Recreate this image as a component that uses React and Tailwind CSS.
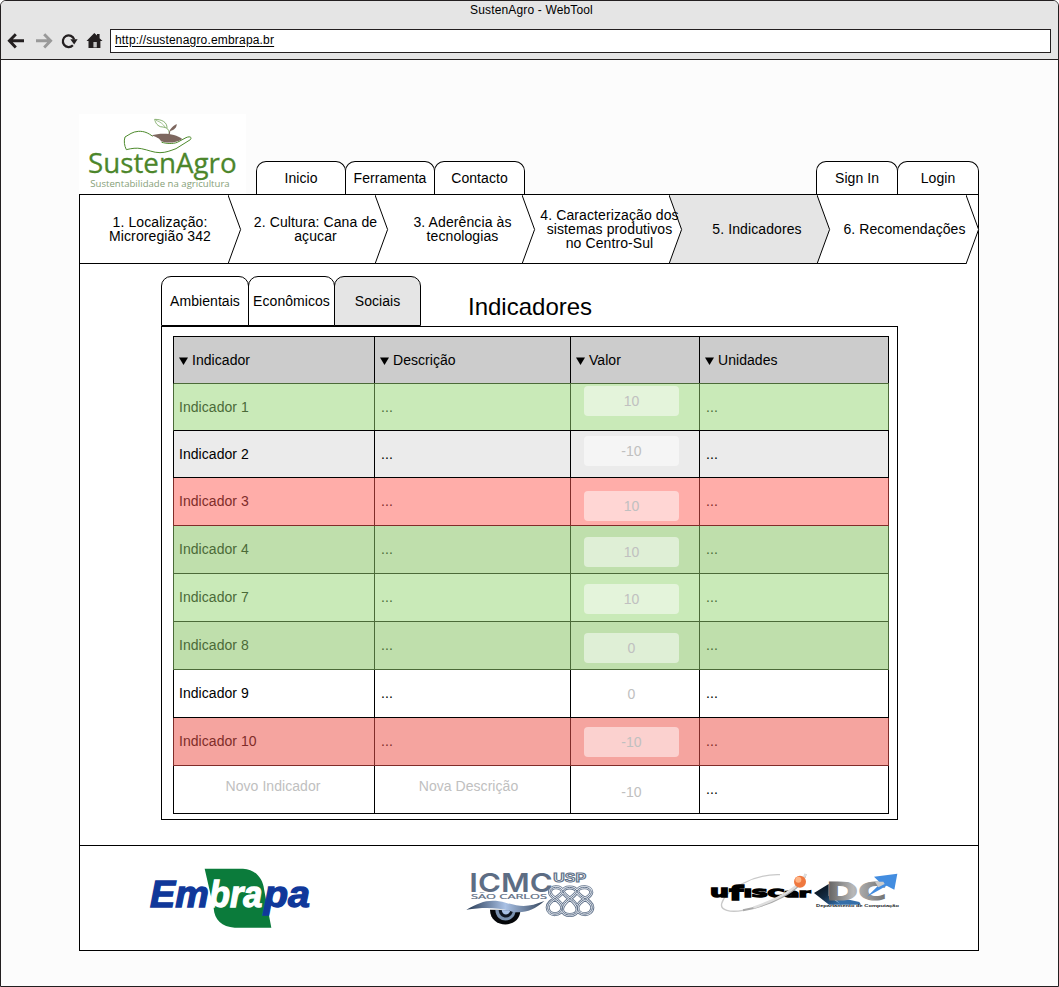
import React from "react";

function BrowserBar() {
  return (
    <header className="h-[59px] shrink-0 rounded-t-[5px] border-b border-[#231f20] bg-[#e5e5e5]">
      <div className="flex h-[28px] justify-center pl-[4px] pt-px text-[12px] leading-[16px] tracking-[0.15px]">SustenAgro - WebTool</div>
      <div className="flex h-[24px] items-center pr-[7px]">
        <svg className="h-[24px] w-[109px] shrink-0" viewBox="1 29 109 24" fill="none">
          <path d="M24 40.8H10.5M15.8 34.2L9.4 40.8L15.8 47.4" stroke="#231f20" strokeWidth="2.9" />
          <path d="M36 40.8H49.5M44.2 34.2L50.6 40.8L44.2 47.4" stroke="#999" strokeWidth="2.9" />
          <path d="M72.9 45.2A5.8 5.8 0 1 1 74.2 39.5" stroke="#231f20" strokeWidth="2.2" />
          <path d="M70.3 39.3H77.6L74.2 44.6Z" fill="#231f20" />
          <path d="M86.5 41L94.3 33L97 35.6V34H99.6V38.2L102.5 41H100.4V48H88.5V41Z" fill="#231f20" />
          <rect x="93.4" y="42" width="3.4" height="5.4" fill="#c5c5c5" />
        </svg>
        <div className="flex h-[24px] flex-1 items-center border border-[#231f20] bg-white pb-[3px] pl-[4px] text-[12px] tracking-[0.18px]">
          <span className="underline underline-offset-2">http://sustenagro.embrapa.br</span>
        </div>
      </div>
    </header>
  );
}

function SustenAgroLogo() {
  return (
    <svg className="h-[80px] w-[167px] bg-white tracking-normal" viewBox="27 27 501 240">
      <g fill="none" stroke="#4d8a2c" strokeWidth="3">
        <path d="M248 94C235 84 222 78 205 79C187 80 178 89 165 96C161 108 163 122 169 134C185 130 200 128 214 131C235 135 250 143 270 143C288 143 301 137 318 131L361 104C367 96 359 93 348 98L322 112C307 118 287 115 275 112" />
        <path d="M298 88C298 68 286 67 271 65C259 60 256 51 254 43C275 43 292 51 291 70" strokeWidth="2" />
        <path d="M258 46C272 51 279 57 286 67" strokeWidth="1.5" />
      </g>
      <path d="M245 91C270 83 315 83 337 102C315 116 290 114 273 109C270 101 259 96 245 91Z" fill="#7d675f" />
      <path d="M296 88C297 75 306 64 320 57C321 67 313 75 301 78L299 89Z" fill="#7d675f" />
      <text x="54" y="204" fontFamily="'Open Sans', sans-serif" fontSize="80" fill="#4c862b" stroke="#4c862b" strokeWidth="0.8" textLength="446" lengthAdjust="spacingAndGlyphs">SustenAgro</text>
      <text x="61" y="247" fontFamily="'Open Sans', sans-serif" fontWeight="400" fontSize="28" fill="#86a078" textLength="418" lengthAdjust="spacingAndGlyphs">Sustentabilidade na agricultura</text>
    </svg>
  );
}

function MainTab({ className, children }) {
  return (
    <div className={`flex h-[33px] items-center justify-center rounded-t-[10px] border border-b-0 border-black bg-white ${className}`}>{children}</div>
  );
}

const steps = [
  { lines: ["1. Localização:", "Microregião 342"], box: "w-[148px] z-60", text: "left-[6px]" },
  { lines: ["2. Cultura: Cana de", "açucar"], box: "w-[147px] z-50", text: "left-[14px]" },
  { lines: ["3. Aderência às", "tecnologias"], box: "w-[147px] z-40", text: "left-[14px]" },
  { lines: ["4. Caracterização dos", "sistemas produtivos", "no Centro-Sul"], box: "w-[147px] z-30", text: "left-[14px]" },
  { lines: ["5. Indicadores"], box: "w-[148px] z-20", text: "left-[14px]", active: true },
  { lines: ["6. Recomendações"], box: "w-[149px] z-10", text: "left-[13px]" },
];

function Step({ step }) {
  return (
    <div className={`relative flex h-[69px] shrink-0 items-center justify-center border-b border-black ${step.box} ${step.active ? "bg-[#e5e5e5]" : "bg-white"}`}>
      <svg className="absolute left-full top-0 h-[69px] w-[14px]" viewBox="0 0 14 69">
        <path d="M0 0L12.6 34.5L0 69" fill={step.active ? "#e5e5e5" : "#fff"} stroke="#000" strokeWidth="1" />
      </svg>
      <div className={`relative text-center leading-[14px] tracking-[0.1px] whitespace-nowrap ${step.text}`}>
        {step.lines.map((l) => <div key={l}>{l}</div>)}
      </div>
    </div>
  );
}

const green = "bg-[#c9eab8] text-[#4b6a38]";
const darkGreen = "bg-[#bfdfac] text-[#4b6a38]";
const gEdge = "border-[#4b6a38]";
const rEdge = "border-[#802c29]";
const rows = [
  { name: "Indicador 1", value: "10", h: "h-[47px]", tone: green, edge: gEdge, line: "border-b-black", pill: "mt-[2px] bg-[#e4f4db]" },
  { name: "Indicador 2", value: "-10", h: "h-[47px]", tone: "bg-[#ebebeb]", edge: "border-black", line: "border-b-black", pill: "mt-[5px] bg-[#f5f5f5]" },
  { name: "Indicador 3", value: "10", h: "h-[48px]", tone: "bg-[#ffada9] text-[#802c29]", edge: rEdge, line: "border-b-[#802c29]", pill: "mt-[13px] bg-[#ffd6d4]" },
  { name: "Indicador 4", value: "10", h: "h-[48px]", tone: darkGreen, edge: gEdge, line: "border-b-[#4b6a38]", pill: "mt-[11px] bg-[#dfefd6]" },
  { name: "Indicador 7", value: "10", h: "h-[48px]", tone: green, edge: gEdge, line: "border-b-[#4b6a38]", pill: "mt-[10px] bg-[#e4f4db]" },
  { name: "Indicador 8", value: "0", h: "h-[48px]", tone: darkGreen, edge: gEdge, line: "border-b-[#4b6a38]", pill: "mt-[11px] bg-[#dfefd6]" },
  { name: "Indicador 9", value: "0", h: "h-[48px]", tone: "bg-white", edge: "border-black", line: "border-b-black", pill: "mt-[9px] bg-white" },
  { name: "Indicador 10", value: "-10", h: "h-[48px]", tone: "bg-[#f5a49f] text-[#802c29]", edge: rEdge, line: "border-b-[#802c29]", pill: "mt-[9px] bg-[#fbd1cf]" },
  { draft: true, value: "-10", h: "h-[48px]", tone: "bg-white", edge: "border-black", line: "border-b-black", pill: "mt-[11px] bg-white" },
];
const columns = "grid grid-cols-[201px_196px_129px_189px]";

function IndicatorTable() {
  return (
    <div className="w-[716px] border-t border-black">
      <div className={`${columns} h-[47px] border-b border-l border-l-black border-b-[#4b6a38] bg-[#ccc]`}>
        {["Indicador", "Descrição", "Valor", "Unidades"].map((c) => (
          <div key={c} className="flex items-center gap-[4px] border-r border-black pl-[5px]">
            <svg className="mt-[2px] h-[8px] w-[9px]" viewBox="0 0 9 8"><path d="M0 0.5H9L4.5 8Z" /></svg>
            <span>{c}</span>
          </div>
        ))}
      </div>
      {rows.map((r, i) => (
        <div key={i} className={`${columns} ${r.h} border-b border-l ${r.tone} ${r.edge} ${r.line}`}>
          {r.draft ? (
            <>
              <div className="flex items-center justify-center border-r border-black pb-[7px] pr-[2px] text-[#c0c0c0]">Novo Indicador</div>
              <div className="flex items-center justify-center border-r border-black pb-[7px] pr-[8px] text-[#c0c0c0]">Nova Descrição</div>
            </>
          ) : (
            <>
              <div className={`flex items-center border-r pb-px pl-[5px] ${r.edge}`}>{r.name}</div>
              <div className={`flex items-center border-r pb-px pl-[6px] ${r.edge}`}>...</div>
            </>
          )}
          <div className={`border-r pl-[13px] ${r.edge}`}>
            <div className={`flex h-[30px] w-[95px] items-center justify-center rounded-[4px] text-[#c0c0c0] ${r.pill}`}>{r.value}</div>
          </div>
          <div className={`flex items-center border-r pb-px pl-[6px] ${r.edge}`}>...</div>
        </div>
      ))}
    </div>
  );
}

function EmbrapaLogo() {
  return (
    <svg className="h-[60px] w-[162px] tracking-normal" viewBox="28 40 486 180">
      <path d="M195 42H310C350 44 370 75 373 103L395 219H285C247 217 224 196 222 160Z" fill="#0b7b3b" />
      <g fontFamily="'Liberation Sans', sans-serif" fontWeight="700" fontStyle="italic" fontSize="113" strokeWidth="4">
        <text x="31" y="158" fill="#10389a" stroke="#10389a" textLength="176" lengthAdjust="spacingAndGlyphs">Em</text>
        <text x="208" y="158" fill="#fff" stroke="#fff" textLength="160" lengthAdjust="spacingAndGlyphs">bra</text>
        <text x="373" y="158" fill="#10389a" stroke="#10389a" textLength="138" lengthAdjust="spacingAndGlyphs">pa</text>
      </g>
    </svg>
  );
}

const knot =
  "M284 97C284 78 315 76 323 95C330 113 364 122 367 147C366 171 321 171 320 147C323 122 357 113 364 95C372 76 407 78 408 97C407 115 368 120 366 143C366 168 410 170 411 142C410 119 370 113 366 95C358 78 327 78 322 95C316 113 278 119 277 142C278 170 320 168 321 143C319 120 285 115 284 97Z";

function IcmcLogo() {
  return (
    <svg className="h-[56px] w-[130px] overflow-visible tracking-normal" viewBox="32 36 390 168">
      <defs>
        <linearGradient id="wave" x1="0" x2="1"><stop offset="0" stopColor="#263954" /><stop offset=".5" stopColor="#a9c1e5" /><stop offset="1" stopColor="#35465d" /></linearGradient>
      </defs>
      <text x="42" y="95" fontFamily="Inter, sans-serif" fontWeight="600" fontSize="77" fill="#5d6d84" textLength="250" lengthAdjust="spacingAndGlyphs">ICMC</text>
      <text x="47" y="116" fontFamily="'Open Sans', sans-serif" fontSize="20" fill="#5d6d84" stroke="#5d6d84" strokeWidth="0.6" textLength="228" lengthAdjust="spacingAndGlyphs">SÃO CARLOS</text>
      <path d="M104 149C104 207 195 208 195 151Z" fill="#05070a" />
      <path d="M120 150C122 192 179 192 181 151Z" fill="#7990ae" />
      <path d="M130 150C132 180 171 180 173 151Z" fill="#101722" />
      <path d="M139 150C141 168 162 168 165 151Z" fill="#a9c1e5" />
      <path d="M33 149C75 126 102 115 151 128C200 143 224 140 267 123C235 152 205 161 171 155C125 142 87 142 33 149Z" fill="url(#wave)" />
      <text x="294" y="67" fontFamily="'Liberation Sans', sans-serif" fontWeight="700" fontSize="36" fill="#fff" stroke="#61728a" strokeWidth="3" textLength="98" lengthAdjust="spacingAndGlyphs">USP</text>
      <path d={knot} fill="none" stroke="#61728a" strokeWidth="12" />
      <path d={knot} fill="none" stroke="#e9edf3" strokeWidth="7" />
      <path d={knot} fill="none" stroke="#61728a" strokeWidth="3" />
    </svg>
  );
}

function UfscarLogo() {
  return (
    <svg className="h-[42px] w-[103px] tracking-normal" viewBox="30 33 309 126">
      <path d="M240 44C160 41 75 91 65 131C60 151 90 158 129 151" fill="none" stroke="#c9c9c9" strokeWidth="4" />
      <g fontFamily="'DejaVu Sans', sans-serif" fontWeight="700" fill="#000" stroke="#000" strokeWidth="4">
        <text x="30" y="112" fontSize="46" textLength="57" lengthAdjust="spacingAndGlyphs">u</text>
        <text x="88" y="121" fontSize="58" textLength="42" lengthAdjust="spacingAndGlyphs">f</text>
        <text x="132" y="112" fontSize="31" textLength="198" lengthAdjust="spacingAndGlyphs">iSCar</text>
      </g>
      <path d="M129 151C204 138 306 92 317 42" fill="none" stroke="#a9a9a9" strokeWidth="6" />
      <path d="M160 143C230 120 302 82 317 42" fill="none" stroke="#dedede" strokeWidth="7" />
      <circle cx="300" cy="65" r="18" fill="#ef783f" /><circle cx="295" cy="59" r="9" fill="#ffb485" />
    </svg>
  );
}

function DcLogo() {
  return (
    <svg className="h-[42px] w-[88px] tracking-normal" viewBox="339 33 264 126">
      <defs>
        <linearGradient id="metal" x1="0" x2="1"><stop offset="0" stopColor="#5c5c5c" /><stop offset=".45" stopColor="#b8b8b8" /><stop offset="1" stopColor="#707070" /></linearGradient>
        <linearGradient id="navy" x1="0" x2="1" y2="1"><stop offset="0" stopColor="#05090e" /><stop offset=".5" stopColor="#142b42" /><stop offset="1" stopColor="#3979b9" /></linearGradient>
      </defs>
      <path d="M342 99L386 72V108L425 134H387Z" fill="url(#navy)" />
      <path d="M387 80L413 116H387Z" fill="#ddd" />
      <path d="M397 108L478 126L483 134H421Z" fill="#356fa9" />
      <text x="379" y="119" fontFamily="'DejaVu Sans', sans-serif" fontWeight="700" fontSize="73" fill="url(#metal)" stroke="url(#metal)" strokeWidth="3" textLength="180" lengthAdjust="spacingAndGlyphs">DC</text>
      <path d="M501 110L542 70L522 50L592 41L583 89L560 77Z" fill="#438de0" />
      <path d="M525 65L550 65L554 72L535 82Z" fill="#ccc" />
      <text x="348" y="140" fontFamily="'Liberation Sans', sans-serif" fontWeight="700" fontSize="13" fill="#15191d" textLength="249" lengthAdjust="spacingAndGlyphs">Departamento de Computação</text>
    </svg>
  );
}

export default function App() {
  return (
    <div className="h-[987px] w-[1059px] bg-white font-['Liberation_Sans',Arial,sans-serif] text-[14px] leading-[16px] tracking-[0.05px] text-black">
      <div className="flex h-full flex-col rounded-t-[6px] border border-[#231f20] bg-[#fcfcfc]">
        <BrowserBar />
        <main className="mx-[78px] flex w-[900px] flex-col">
          <div className="flex h-[134px] items-end">
            <SustenAgroLogo />
            <nav className="ml-[10px] flex">
              <MainTab className="w-[90px]">Inicio</MainTab>
              <MainTab className="-ml-px w-[90px]">Ferramenta</MainTab>
              <MainTab className="-ml-px w-[91px]">Contacto</MainTab>
            </nav>
            <nav className="ml-auto flex">
              <MainTab className="w-[82px]">Sign In</MainTab>
              <MainTab className="-ml-px w-[82px]">Login</MainTab>
            </nav>
          </div>
          <div className="flex h-[757px] flex-col border border-black bg-white">
            <div className="flex">{steps.map((s) => <Step key={s.lines[0]} step={s} />)}</div>
            <section className="ml-[81px] mt-[12px] w-[737px]">
              <div className="flex">
                <div className="flex h-[50px] w-[88px] items-center justify-center rounded-t-[10px] border border-black">Ambientais</div>
                <div className="-ml-px flex h-[50px] w-[87px] items-center justify-center rounded-t-[10px] border border-black">Econômicos</div>
                <div className="-ml-px flex h-[50px] w-[87px] items-center justify-center rounded-t-[10px] border border-black bg-[#e5e5e5]">Sociais</div>
                <h1 className="ml-[47px] mt-[17px] text-[24px] leading-[28px] tracking-normal">Indicadores</h1>
              </div>
              <div className="h-[494px] border border-black pl-[11px] pt-[9px]">
                <IndicatorTable />
              </div>
            </section>
            <footer className="mt-[25px] flex flex-1 items-start border-t border-black">
              <div className="ml-[69px] mt-[22px]"><EmbrapaLogo /></div>
              <div className="ml-[155px] mt-[26px]"><IcmcLogo /></div>
              <div className="ml-[114px] mt-[25px] flex"><UfscarLogo /><DcLogo /></div>
            </footer>
          </div>
        </main>
      </div>
    </div>
  );
}
